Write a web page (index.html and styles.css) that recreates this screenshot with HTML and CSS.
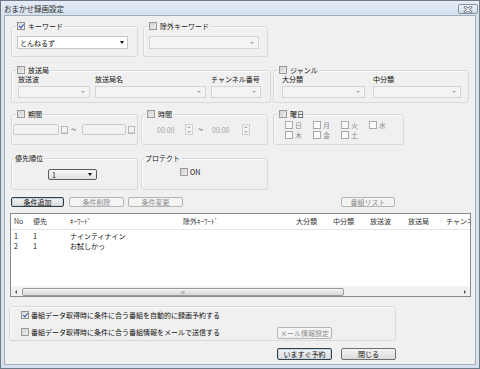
FILE: index.html
```html
<!DOCTYPE html>
<html lang="ja">

<head>
    <meta charset="UTF-8">
    <title>おまかせ録画設定</title>
    <link rel="stylesheet" href="styles.css">
</head>

<body>
    <div class="window">
        <div class="titlebar">
            <span class="title">おまかせ録画設定</span>
            <span class="close">
                <svg width="10" height="7" viewBox="0 0 10 7">
                    <path d="M2 1 L8 6 M8 1 L2 6" stroke="#4a5563" stroke-width="2.6" stroke-linecap="round" />
                    <path d="M2 1 L8 6 M8 1 L2 6" stroke="#ffffff" stroke-width="1.2" stroke-linecap="round" />
                </svg>
            </span>
        </div>

        <div class="body">
            <div class="row row1">
                <fieldset class="group g-keyword">
                    <legend><span class="cb checked"></span>キーワード</legend>
                    <div class="gbody">
                        <div class="combo w111"><span>とんねるず</span><i class="arrow"></i></div>
                    </div>
                </fieldset>
                <fieldset class="group g-exclude">
                    <legend><span class="cb gray"></span>除外キーワード</legend>
                    <div class="gbody">
                        <div class="combo disabled w110"><i class="arrow"></i></div>
                    </div>
                </fieldset>
            </div>

            <div class="row row2">
                <fieldset class="group g-station">
                    <legend><span class="cb gray"></span>放送局</legend>
                    <div class="gbody fields">
                        <div class="field w72">
                            <div class="field-label">放送波</div>
                            <div class="combo disabled"><i class="arrow"></i></div>
                        </div>
                        <div class="field w111">
                            <div class="field-label">放送局名</div>
                            <div class="combo disabled"><i class="arrow"></i></div>
                        </div>
                        <div class="field w50">
                            <div class="field-label">チャンネル番号</div>
                            <div class="combo disabled"><i class="arrow"></i></div>
                        </div>
                    </div>
                </fieldset>
                <fieldset class="group g-genre">
                    <legend><span class="cb gray"></span>ジャンル</legend>
                    <div class="gbody fields wide">
                        <div class="field w83">
                            <div class="field-label">大分類</div>
                            <div class="combo disabled"><i class="arrow"></i></div>
                        </div>
                        <div class="field w88">
                            <div class="field-label">中分類</div>
                            <div class="combo disabled"><i class="arrow"></i></div>
                        </div>
                    </div>
                </fieldset>
            </div>

            <div class="row row3">
                <fieldset class="group g-period">
                    <legend><span class="cb gray"></span>期間</legend>
                    <div class="gbody period">
                        <span class="date"></span>
                        <span class="dots">...</span>
                        <span class="tilde">~</span>
                        <span class="date short"></span>
                        <span class="dots">...</span>
                    </div>
                </fieldset>
                <fieldset class="group g-time">
                    <legend><span class="cb gray"></span>時間</legend>
                    <div class="gbody period">
                        <span class="time">00:00</span>
                        <span class="spin"><i class="up"></i><i class="down"></i></span>
                        <span class="tilde t2">~</span>
                        <span class="time t2">00:00</span>
                        <span class="spin"><i class="up"></i><i class="down"></i></span>
                    </div>
                </fieldset>
                <fieldset class="group g-days">
                    <legend><span class="cb gray"></span>曜日</legend>
                    <div class="gbody days">
                        <span class="day"><span class="cb plain"></span>日</span>
                        <span class="day"><span class="cb plain"></span>月</span>
                        <span class="day"><span class="cb plain"></span>火</span>
                        <span class="day"><span class="cb plain"></span>水</span>
                        <span class="day"><span class="cb plain"></span>木</span>
                        <span class="day"><span class="cb plain"></span>金</span>
                        <span class="day"><span class="cb plain"></span>土</span>
                    </div>
                </fieldset>
            </div>

            <div class="row row4">
                <fieldset class="group g-priority">
                    <legend class="plain-legend">優先順位</legend>
                    <div class="gbody">
                        <div class="combo list-combo"><span>1</span><i class="arrow"></i></div>
                    </div>
                </fieldset>
                <fieldset class="group g-protect">
                    <legend class="plain-legend">プロテクト</legend>
                    <div class="gbody">
                        <label class="check-line"><span class="cb gray"></span>ON</label>
                    </div>
                </fieldset>
            </div>

            <div class="actions">
                <span class="btn default">条件追加</span>
                <span class="btn off">条件削除</span>
                <span class="btn off">条件変更</span>
                <span class="btn off list-btn">番組リスト</span>
            </div>

            <div class="listview">
                <div class="list-inner">
                    <table class="list-table">
                        <colgroup>
                            <col style="width:19px">
                            <col style="width:37px">
                            <col style="width:113px">
                            <col style="width:113px">
                            <col style="width:37px">
                            <col style="width:37px">
                            <col style="width:38px">
                            <col style="width:38px">
                            <col style="width:60px">
                        </colgroup>
                        <thead>
                            <tr>
                                <th>No</th>
                                <th>優先</th>
                                <th>ｷｰﾜｰﾄﾞ</th>
                                <th>除外ｷｰﾜｰﾄﾞ</th>
                                <th>大分類</th>
                                <th>中分類</th>
                                <th>放送波</th>
                                <th>放送局</th>
                                <th>チャンネル番号</th>
                            </tr>
                        </thead>
                        <tbody>
                            <tr>
                                <td>1</td>
                                <td>1</td>
                                <td>ナインティナイン</td>
                                <td></td><td></td><td></td><td></td><td></td><td></td>
                            </tr>
                            <tr>
                                <td>2</td>
                                <td>1</td>
                                <td>お試しかっ</td>
                                <td></td><td></td><td></td><td></td><td></td><td></td>
                            </tr>
                        </tbody>
                    </table>
                </div>
                <div class="hscroll">
                    <span class="sarrow left"></span>
                    <div class="track"><div class="thumb"><span class="grip">III</span></div></div>
                    <span class="sarrow right"></span>
                </div>
            </div>

            <div class="bottom">
                <fieldset class="group g-auto">
                    <div class="gbody">
                        <label class="check-line"><span class="cb checked"></span>番組データ取得時に条件に合う番組を自動的に録画予約する</label>
                        <div class="mail-row">
                            <label class="check-line"><span class="cb gray"></span>番組データ取得時に条件に合う番組情報をメールで送信する</label>
                            <span class="btn off mail-btn">メール情報設定</span>
                        </div>
                    </div>
                </fieldset>
                <div class="footer">
                    <span class="btn default big">いますぐ予約</span>
                    <span class="btn big">閉じる</span>
                </div>
            </div>
        </div>
    </div>
</body>

</html>
```

FILE: styles.css
```css
* {
    box-sizing: border-box;
}

body {
    margin: 0;
    font-family: "Noto Sans CJK JP", "Noto Sans", sans-serif;
    font-size: 7px;
    color: #111;
    background: #ffffff;
}

.window {
    width: 480px;
    height: 369px;
    border: 1px solid #6f7a88;
    background: #d6e1ee;
    display: flex;
    flex-direction: column;
}

.titlebar {
    height: 14px;
    display: flex;
    align-items: center;
    justify-content: space-between;
    padding: 0 1px 0 3px;
    background: linear-gradient(#e4ecf6, #d6e1ee);
}

.title {
    font-size: 7.5px;
    color: #2c2c2c;
}

.close {
    width: 20px;
    height: 10px;
    margin-top: 2px;
    border: 1px solid #8793a2;
    border-radius: 2px;
    background: linear-gradient(#eef3f9, #d3dde9);
    display: flex;
    align-items: center;
    justify-content: center;
}

.body {
    flex: 1;
    margin: 0 3px 3px;
    border: 1px solid #a4aeba;
    background: #f0f0f0;
    padding: 5px 0 0 6px;
}

/* group boxes */
.row {
    display: flex;
}

.group {
    margin: 0;
    padding: 0;
    min-width: 0;
    border: 1px solid #d5dadf;
    border-radius: 3px;
    box-shadow: inset 1px 1px 0 #fafafa;
}

.group legend {
    display: flex;
    align-items: center;
    gap: 3px;
    height: 10px;
    line-height: 10px;
    padding: 0 1px;
    margin-left: 4px;
}

.group legend.plain-legend {
    margin-left: 2px;
}

.row1 .group {
    height: 36px;
}

.row1 .gbody {
    padding: 5px 0 0 5px;
}

.g-keyword {
    width: 127px;
}

.g-exclude {
    width: 125px;
    margin-left: 5px;
}

.row2 {
    margin-top: 8px;
}

.row2 .group {
    height: 38px;
}

.g-station {
    width: 260px;
}

.g-station .gbody {
    padding-left: 6px;
}

.g-genre {
    width: 196px;
    margin-left: 2px;
}

.g-genre .gbody {
    padding-left: 8px;
}

.fields {
    display: flex;
    gap: 5px;
}

.fields.wide {
    gap: 8px;
}

.field-label {
    height: 9px;
    line-height: 9px;
    margin-bottom: 2px;
    white-space: nowrap;
}

.w50 { width: 50px; }
.w72 { width: 72px; }
.w83 { width: 83px; }
.w88 { width: 88px; }
.w110 { width: 110px; }
.w111 { width: 111px; }

.row3 {
    margin-top: 6px;
}

.row3 .group {
    height: 36px;
}

.g-period {
    width: 127px;
}

.g-period .gbody {
    padding: 5px 0 0 1px;
}

.g-time {
    width: 127px;
    margin-left: 3px;
}

.g-time .gbody {
    padding: 5px 0 0 15px;
}

.g-days {
    width: 131px;
    margin-left: 5px;
}

.g-days .gbody {
    padding: 1px 0 0 11px;
}

.row4 {
    margin-top: 8px;
}

.row4 .group {
    height: 37px;
}

.g-priority {
    width: 127px;
}

.g-priority .gbody {
    padding: 6px 0 0 36px;
}

.g-protect {
    width: 127px;
    margin-left: 3px;
}

.g-protect .gbody {
    padding: 4px 0 0 38px;
}

/* check boxes */
.cb {
    display: inline-block;
    flex: none;
    width: 8px;
    height: 8px;
    border: 1px solid #8f8f8f;
    background: linear-gradient(135deg, #cfcfcf, #f6f6f6);
    position: relative;
}

.cb.gray {
    border-color: #9a9a9a;
    background: linear-gradient(135deg, #d2d2d2, #efefef);
}

.cb.plain {
    border-color: #a9a9a9;
    background: #fbfbfb;
}

.cb.checked {
    background: linear-gradient(135deg, #dadada, #fafafa);
}

.cb.checked::after {
    content: "";
    position: absolute;
    left: 2px;
    top: 0;
    width: 2px;
    height: 4px;
    border: solid #2a4fa8;
    border-width: 0 1.5px 1.5px 0;
    transform: rotate(40deg);
}

.check-line {
    display: flex;
    align-items: center;
    gap: 2px;
    height: 10px;
    line-height: 10px;
}

/* combo boxes */
.combo {
    height: 12px;
    border: 1px solid #c4c7cc;
    background: #fff;
    display: flex;
    align-items: center;
    justify-content: space-between;
    padding: 0 3px 0 2px;
}

.row1 .combo {
    height: 13px;
}

.combo.disabled {
    background: #f4f4f4;
    border-color: #d6d6d6;
}

.arrow {
    margin-left: auto;
    width: 0;
    height: 0;
    border-left: 2.5px solid transparent;
    border-right: 2.5px solid transparent;
    border-top: 3px solid #111;
}

.combo.disabled .arrow {
    border-top: 2px solid #a8a8a8;
    border-left-width: 2px;
    border-right-width: 2px;
    margin-right: 1px;
}

.list-combo {
    width: 49px;
    height: 11px;
    border: 1px solid #5c5c5c;
    border-radius: 2px;
    background: linear-gradient(#f7f7f7, #e2e2e2);
    padding: 0 4px 0 3px;
}

/* period and time */
.period {
    display: flex;
    align-items: center;
    height: 11px;
    box-sizing: content-box;
}

.date {
    width: 46px;
    height: 11px;
    border: 1px solid #c9c9c9;
    border-radius: 2px;
    background: #f2f2f2;
}

.date.short {
    width: 44px;
}

.dots {
    width: 7px;
    height: 8px;
    margin-left: 2px;
    border: 1px solid #b5b5b5;
    background: #f4f4f4;
    font-size: 5px;
    line-height: 7px;
    text-align: center;
    color: #777;
    align-self: flex-end;
    margin-bottom: 1px;
}

.tilde {
    width: 8px;
    margin: 0 3px;
    font-size: 9px;
    color: #333;
}

.time {
    width: 28px;
    color: #a5a5a5;
}

.time.t2 {
    width: 30px;
    margin-left: 3px;
}

.tilde.t2 {
    margin-left: 5px;
}

.spin {
    width: 8px;
    height: 11px;
    border: 1px solid #cfcfcf;
    background: #f4f4f4;
    display: flex;
    flex-direction: column;
    align-items: center;
    justify-content: space-around;
}

.spin i {
    width: 0;
    height: 0;
    border-left: 2px solid transparent;
    border-right: 2px solid transparent;
}

.spin .up {
    border-bottom: 2px solid #b0b0b0;
}

.spin .down {
    border-top: 2px solid #b0b0b0;
}

.days {
    display: grid;
    grid-template-columns: repeat(4, 28px);
    grid-auto-rows: 10px;
}

.day {
    display: flex;
    align-items: center;
    gap: 2px;
    color: #8a8a8a;
}

/* buttons */
.actions {
    display: flex;
    margin-top: 7px;
    height: 10px;
}

.btn {
    width: 55px;
    height: 10px;
    line-height: 8px;
    text-align: center;
    border: 1px solid #707070;
    border-radius: 2px;
    background: linear-gradient(#f3f3f3, #dcdcdc);
    white-space: nowrap;
}

.btn.default {
    border-color: #3c3c3c;
    box-shadow: inset 0 0 0 1px #b9d7ee;
}

.btn.off {
    border-color: #b4b4b4;
    background: #f4f4f4;
    color: #8c8c8c;
}

.actions .btn:first-child {
    width: 53px;
}

.actions .btn + .btn {
    margin-left: 5px;
}

.actions .btn:nth-child(3) {
    margin-left: 4px;
}

.actions .list-btn {
    width: 54px;
    margin-left: 158px !important;
}

/* list view */
.listview {
    width: 461px;
    height: 84px;
    margin: 6px 0 0 -1px;
    border: 1px solid #838a93;
    background: #fff;
    display: flex;
    flex-direction: column;
}

.list-inner {
    flex: 1;
    overflow: hidden;
}

.list-table {
    table-layout: fixed;
    width: 492px;
    border-collapse: collapse;
}

.list-table th {
    height: 15px;
    padding: 0 0 0 3px;
    font-weight: normal;
    text-align: left;
    color: #333;
    white-space: nowrap;
    overflow: hidden;
    border-bottom: 1px solid #e5e5e5;
}

.list-table td {
    height: 10px;
    line-height: 10px;
    padding: 0 0 0 3px;
    white-space: nowrap;
}

.list-table tbody tr:first-child td {
    padding-top: 1px;
}

.hscroll {
    height: 10px;
    display: flex;
    align-items: center;
    background: #f0f0f0;
    border-top: 1px solid #f7f7f7;
}

.sarrow {
    width: 10px;
    display: flex;
    justify-content: center;
}

.sarrow::before {
    content: "";
    border-top: 2px solid transparent;
    border-bottom: 2px solid transparent;
}

.sarrow.left::before {
    border-right: 2px solid #555;
}

.sarrow.right::before {
    border-left: 2px solid #555;
}

.track {
    flex: 1;
    height: 8px;
    padding: 0 1px;
}

.thumb {
    width: 322px;
    height: 8px;
    border: 1px solid #9a9a9a;
    border-radius: 2px;
    background: linear-gradient(#f2f2f2, #d8d8d8);
    font-size: 4px;
    line-height: 6px;
    text-align: center;
    color: #666;
}

/* bottom part */
.bottom {
    width: 387px;
    margin: 9px 0 0 -2px;
}

.g-auto {
    height: 35px;
}

.g-auto .gbody {
    padding: 3px 0 0 11px;
    display: flex;
    flex-direction: column;
    gap: 5px;
}

.mail-row {
    display: flex;
    align-items: center;
}

.mail-row .check-line {
    width: 256px;
}

.mail-btn {
    width: 55px;
    height: 12px;
    line-height: 10px;
    margin-top: 2px;
}

.footer {
    display: flex;
    justify-content: flex-end;
    gap: 9px;
    margin-top: 7px;
}

.btn.big {
    width: 55px;
    height: 12px;
    line-height: 10px;
}
```
